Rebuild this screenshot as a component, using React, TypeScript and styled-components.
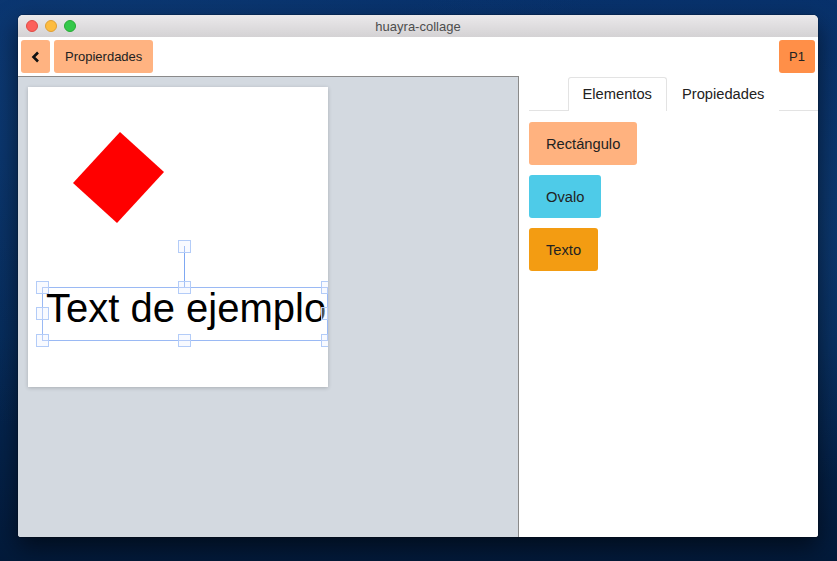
import React from "react";
import styled, { createGlobalStyle } from "styled-components";

const Global = createGlobalStyle`
  html, body { margin: 0; padding: 0; }
  body {
    width: 837px;
    height: 561px;
    overflow: hidden;
    font-family: "Liberation Sans", Arial, sans-serif;
  }
`;

const Desktop = styled.div`
  width: 837px;
  height: 561px;
  box-sizing: border-box;
  padding: 15px 19px 24px 18px;
  background:
    radial-gradient(ellipse at 85% 40%, rgba(20, 70, 130, 0.55), transparent 55%),
    radial-gradient(ellipse at 10% 20%, rgba(20, 70, 130, 0.45), transparent 50%),
    linear-gradient(180deg, #07306a 0%, #052957 60%, #031a3a 100%);
`;

const Window = styled.div`
  width: 800px;
  height: 522px;
  display: flex;
  flex-direction: column;
  border-radius: 5px 5px 3px 3px;
  overflow: hidden;
  background: #fff;
  box-shadow: 0 10px 24px rgba(0, 0, 0, 0.55), 0 0 0 1px rgba(0, 0, 0, 0.15);
`;

const TitleBar = styled.div`
  position: relative;
  height: 22px;
  flex: none;
  display: flex;
  align-items: center;
  justify-content: center;
  background: linear-gradient(180deg, #ebe9eb 0%, #d4d2d4 100%);
  font-size: 13px;
  color: #4d4d4d;
`;

const Lights = styled.div`
  position: absolute;
  left: 8px;
  top: 5px;
  display: flex;
  gap: 7px;
`;

const Light = styled.span<{ $c: string; $b: string }>`
  width: 12px;
  height: 12px;
  border-radius: 50%;
  box-sizing: border-box;
  background: ${(p) => p.$c};
  border: 0.5px solid ${(p) => p.$b};
`;

const Toolbar = styled.div`
  height: 39px;
  flex: none;
  box-sizing: border-box;
  padding: 3px;
  display: flex;
  align-items: stretch;
  gap: 4px;
  background: #fff;
`;

const ToolButton = styled.button<{ $dark?: boolean }>`
  border: none;
  border-radius: 3px;
  margin: 0;
  padding: 0 ${(p) => (p.$dark ? "10px" : "11px")};
  height: 33px;
  font-family: "Liberation Sans", Arial, sans-serif;
  font-size: 13px;
  color: #222;
  background: ${(p) => (p.$dark ? "#ff8f48" : "#ffb381")};
  display: flex;
  align-items: center;
  justify-content: center;
`;

const BackButton = styled(ToolButton)`
  width: 29px;
  padding: 0;
`;

const Spacer = styled.div`
  flex: 1;
`;

const Main = styled.div`
  flex: 1;
  display: flex;
  min-height: 0;
`;

const Stage = styled.div`
  width: 501px;
  flex: none;
  box-sizing: border-box;
  border-top: 1px solid #8a8a8a;
  border-right: 1px solid #8a8a8a;
  background: #d3d9e0;
  padding: 10px;
`;

const Page = styled.div`
  position: relative;
  width: 300px;
  height: 300px;
  background: #fff;
  overflow: hidden;
  box-shadow: 0 1px 4px rgba(0, 0, 0, 0.2);
`;

const Drawing = styled.svg`
  position: absolute;
  left: 0;
  top: 0;
`;

const SampleText = styled.div`
  position: absolute;
  left: 18px;
  top: 201px;
  font-family: "Liberation Sans", Arial, sans-serif;
  font-size: 40px;
  line-height: 40px;
  color: #000;
  white-space: nowrap;
`;

const Side = styled.div`
  flex: 1;
  background: #fff;
  padding-top: 1px;
  display: flex;
  flex-direction: column;
`;

const TabBar = styled.div`
  margin-left: 10px;
  display: flex;
  justify-content: center;
  border-bottom: 1px solid #e3e3e3;
`;

const Tab = styled.div<{ $active?: boolean }>`
  padding: 6px 14px 7px;
  line-height: 20px;
  font-size: 14.7px;
  color: #222;
  border: 1px solid ${(p) => (p.$active ? "#e3e3e3" : "transparent")};
  border-bottom: none;
  border-radius: 3px 3px 0 0;
  margin-bottom: -1px;
  background: #fff;
`;

const ElementList = styled.div`
  padding: 11px 0 0 10px;
  display: flex;
  flex-direction: column;
  align-items: flex-start;
  gap: 10px;
`;

const ElementButton = styled.button<{ $bg: string }>`
  border: none;
  border-radius: 3px;
  margin: 0;
  padding: 0 17px;
  height: 43px;
  font-family: "Liberation Sans", Arial, sans-serif;
  font-size: 14.7px;
  color: #222;
  background: ${(p) => p.$bg};
`;

const handles: [number, number][] = [
  [14, 200],
  [156, 200],
  [299, 200],
  [14, 226],
  [299, 226],
  [14, 253],
  [156, 253],
  [299, 253],
  [156, 159],
];

export default function App() {
  return (
    <>
      <Global />
      <Desktop>
        <Window>
          <TitleBar>
            <Lights>
              <Light $c="#fc605c" $b="#de4a45" />
              <Light $c="#fdbc40" $b="#de9f34" />
              <Light $c="#34c84a" $b="#27aa35" />
            </Lights>
            huayra-collage
          </TitleBar>
          <Toolbar>
            <BackButton aria-label="volver">
              <svg width="10" height="12" viewBox="0 0 10 12">
                <path d="M7 1.5 L2.5 6 L7 10.5" fill="none" stroke="#111" strokeWidth="2.6" />
              </svg>
            </BackButton>
            <ToolButton>Propierdades</ToolButton>
            <Spacer />
            <ToolButton $dark>P1</ToolButton>
          </Toolbar>
          <Main>
            <Stage>
              <Page>
                <Drawing width="300" height="300" viewBox="0 0 300 300">
                  <polygon points="92,45 136,85 89,136 45,96" fill="#ff0000" />
                </Drawing>
                <SampleText>Text de ejemplo</SampleText>
                <Drawing width="300" height="300" viewBox="0 0 300 300">
                  <line x1="156.5" y1="159" x2="156.5" y2="200" stroke="#7fa8f2" strokeWidth="1" />
                  <rect x="14.5" y="200.5" width="285" height="53" fill="none" stroke="#9ab9f4" strokeWidth="1" />
                  {handles.map(([x, y], i) => (
                    <rect
                      key={i}
                      x={x - 5.5}
                      y={y - 5.5}
                      width="12"
                      height="12"
                      fill="rgba(235,242,255,0.35)"
                      stroke="#b3ccf8"
                      strokeWidth="1"
                    />
                  ))}
                </Drawing>
              </Page>
            </Stage>
            <Side>
              <TabBar>
                <Tab $active>Elementos</Tab>
                <Tab>Propiedades</Tab>
              </TabBar>
              <ElementList>
                <ElementButton $bg="#ffb27f">Rectángulo</ElementButton>
                <ElementButton $bg="#4ecbe8">Ovalo</ElementButton>
                <ElementButton $bg="#f39c12">Texto</ElementButton>
              </ElementList>
            </Side>
          </Main>
        </Window>
      </Desktop>
    </>
  );
}
